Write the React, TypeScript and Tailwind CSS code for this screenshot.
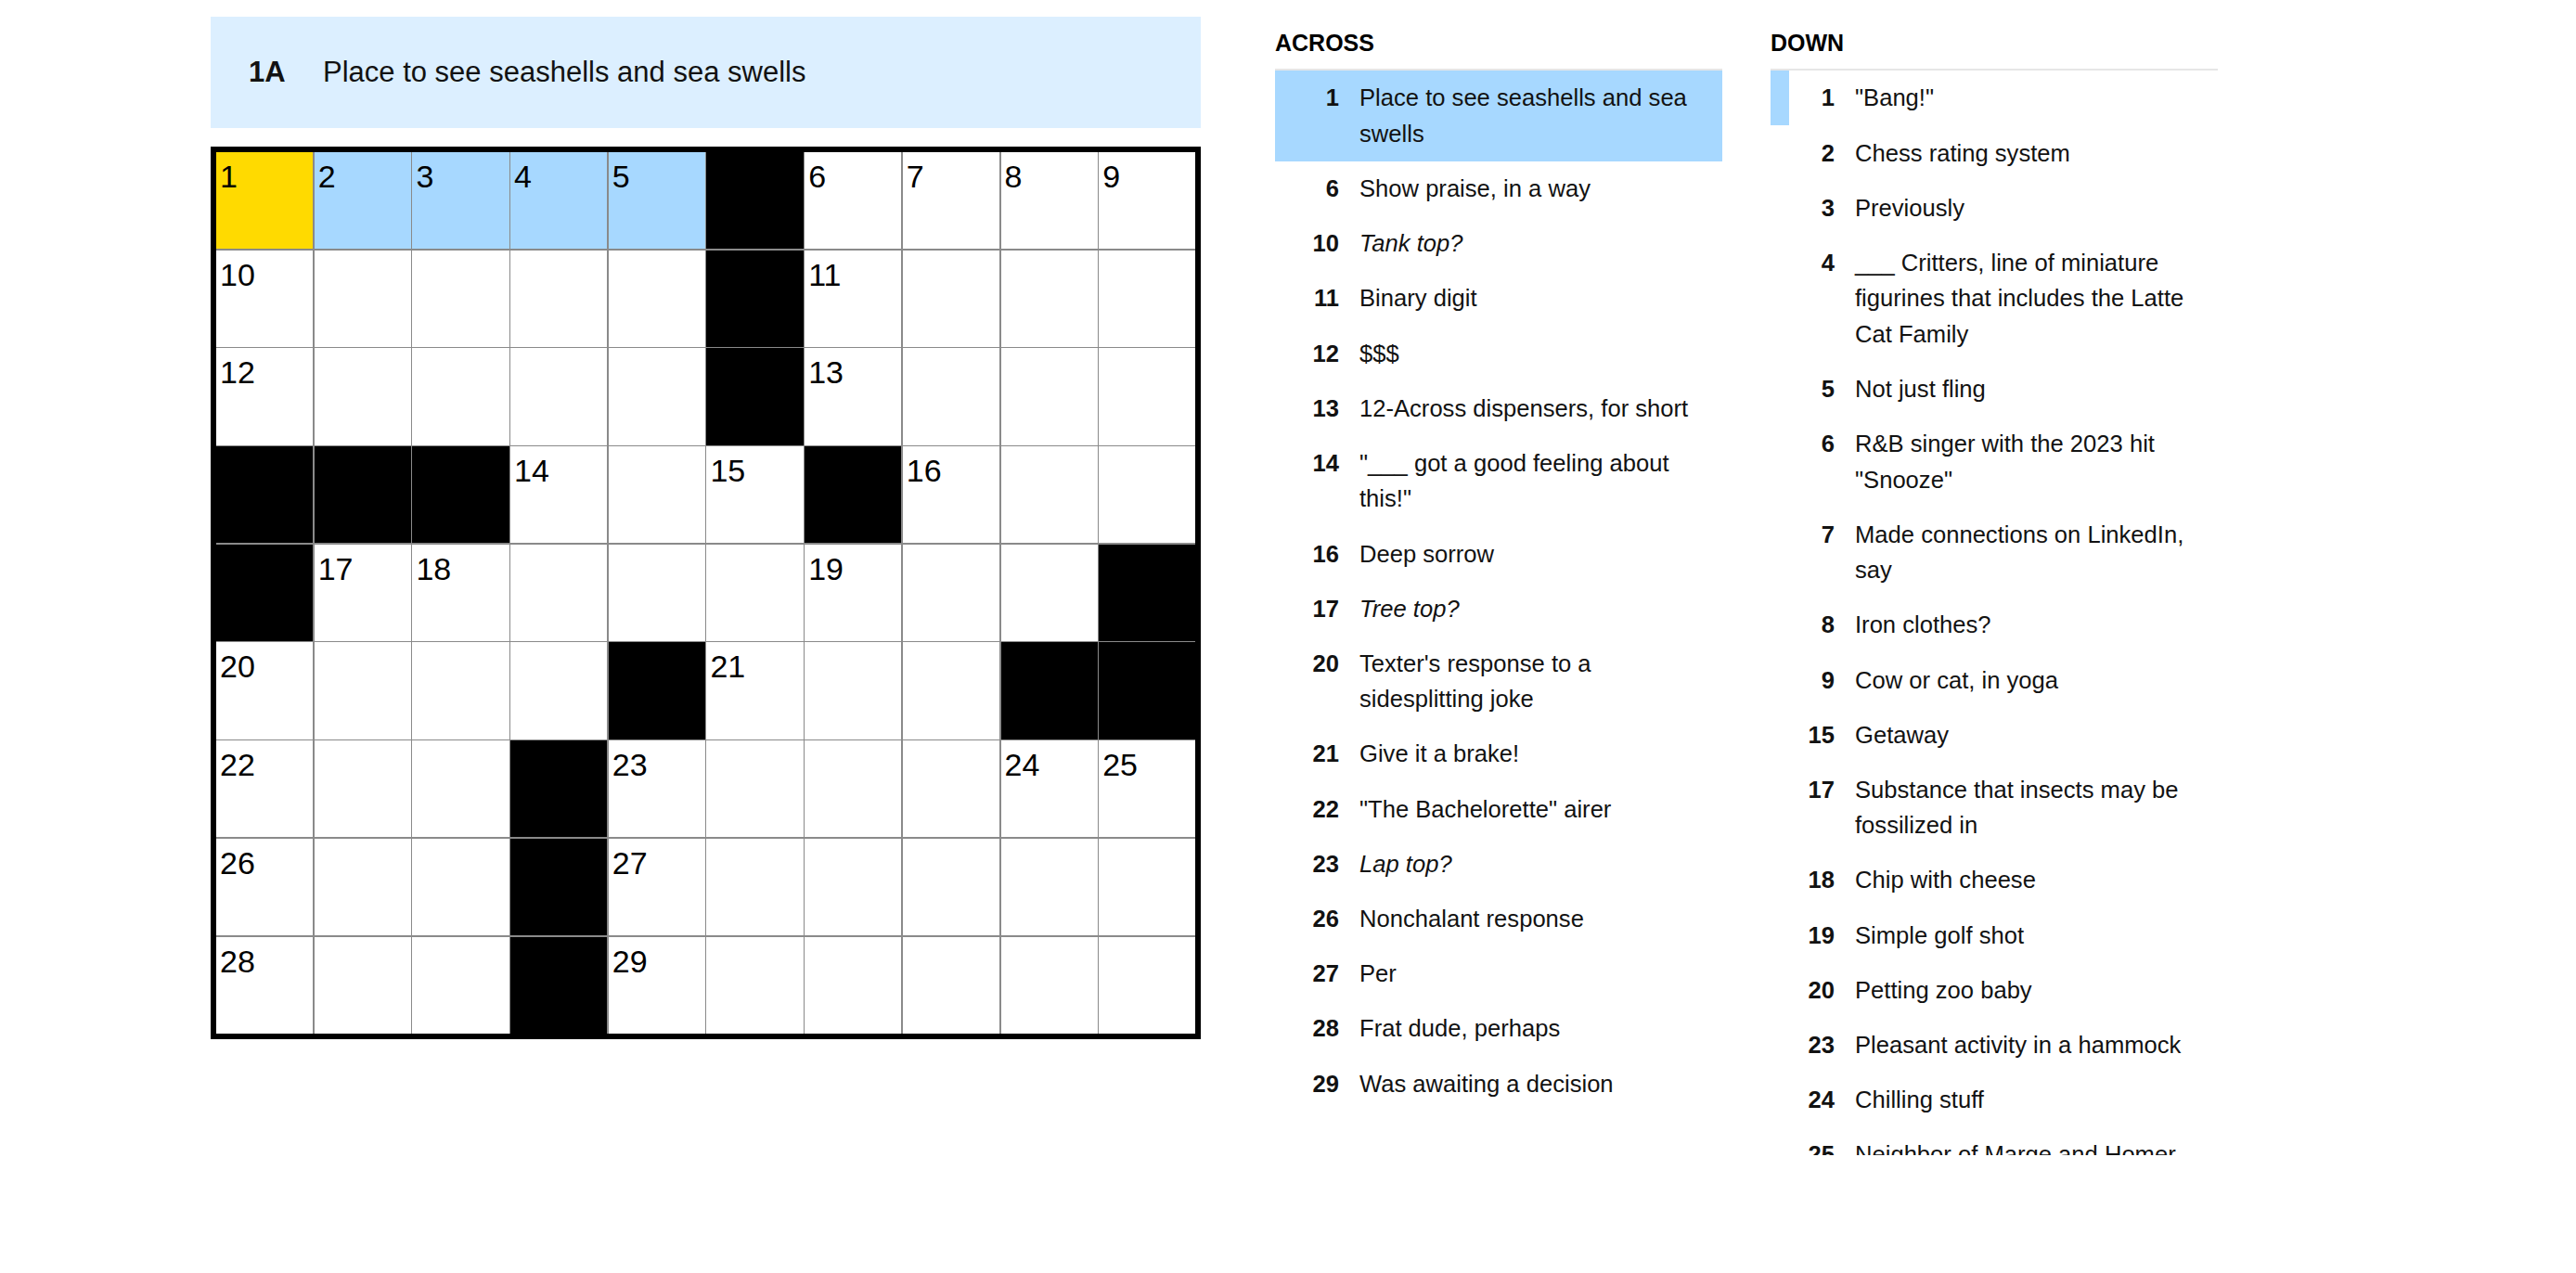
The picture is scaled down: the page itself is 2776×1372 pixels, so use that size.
const rows: string[][] = [
  ["1", "2", "3", "4", "5", "#", "6", "7", "8", "9"],
  ["10", "", "", "", "", "#", "11", "", "", ""],
  ["12", "", "", "", "", "#", "13", "", "", ""],
  ["#", "#", "#", "14", "", "15", "#", "16", "", ""],
  ["#", "17", "18", "", "", "", "19", "", "", "#"],
  ["20", "", "", "", "#", "21", "", "", "#", "#"],
  ["22", "", "", "#", "23", "", "", "", "24", "25"],
  ["26", "", "", "#", "27", "", "", "", "", ""],
  ["28", "", "", "#", "29", "", "", "", "", ""],
];

type Clue = { num: string; text: string; italic?: boolean };

const across: Clue[] = [
  { num: "1", text: "Place to see seashells and sea swells" },
  { num: "6", text: "Show praise, in a way" },
  { num: "10", text: "Tank top?", italic: true },
  { num: "11", text: "Binary digit" },
  { num: "12", text: "$$$" },
  { num: "13", text: "12-Across dispensers, for short" },
  { num: "14", text: "\"___ got a good feeling about this!\"" },
  { num: "16", text: "Deep sorrow" },
  { num: "17", text: "Tree top?", italic: true },
  { num: "20", text: "Texter's response to a sidesplitting joke" },
  { num: "21", text: "Give it a brake!" },
  { num: "22", text: "\"The Bachelorette\" airer" },
  { num: "23", text: "Lap top?", italic: true },
  { num: "26", text: "Nonchalant response" },
  { num: "27", text: "Per" },
  { num: "28", text: "Frat dude, perhaps" },
  { num: "29", text: "Was awaiting a decision" },
];

const down: Clue[] = [
  { num: "1", text: "\"Bang!\"" },
  { num: "2", text: "Chess rating system" },
  { num: "3", text: "Previously" },
  { num: "4", text: "___ Critters, line of miniature figurines that includes the Latte Cat Family" },
  { num: "5", text: "Not just fling" },
  { num: "6", text: "R&B singer with the 2023 hit \"Snooze\"" },
  { num: "7", text: "Made connections on LinkedIn, say" },
  { num: "8", text: "Iron clothes?" },
  { num: "9", text: "Cow or cat, in yoga" },
  { num: "15", text: "Getaway" },
  { num: "17", text: "Substance that insects may be fossilized in" },
  { num: "18", text: "Chip with cheese" },
  { num: "19", text: "Simple golf shot" },
  { num: "20", text: "Petting zoo baby" },
  { num: "23", text: "Pleasant activity in a hammock" },
  { num: "24", text: "Chilling stuff" },
  { num: "25", text: "Neighbor of Marge and Homer" },
];

function cellColor(r: number, c: number, value: string) {
  if (value === "#") return "bg-black";
  if (r === 0 && c === 0) return "bg-[#ffda00]";
  if (r === 0 && c < 5) return "bg-[#a7d8ff]";
  return "bg-white";
}

function ClueList({ title, clues, selected, related }: { title: string; clues: Clue[]; selected?: string; related?: string }) {
  return (
    <div className="w-[482px]">
      <h3 className="mt-[34px] pb-[15px] border-b-2 border-[#e6e6e6] text-[25px] leading-[25px] font-bold text-black">
        {title}
      </h3>
      <ol className="h-[1169px] overflow-hidden">
        {clues.map((clue) => {
          const isSelected = clue.num === selected;
          const isRelated = clue.num === related;
          return (
            <li
              key={clue.num}
              className={`flex py-[10.4px] border-l-[20px] text-[25.6px] leading-[38.4px] text-[#121212] ${
                isSelected ? "bg-[#a7d8ff] border-transparent" : isRelated ? "border-[#a7d8ff]" : "border-transparent"
              }`}
            >
              <span className="w-[49px] shrink-0 text-right font-bold">{clue.num}</span>
              <span className={`ml-[22px] w-[380px] ${clue.italic ? "italic" : ""}`}>{clue.text}</span>
            </li>
          );
        })}
      </ol>
    </div>
  );
}

export default function App() {
  return (
    <div className="h-[1372px] bg-white font-['Liberation_Sans',Arial,sans-serif]">
      <div className="flex pl-[227px]">
        {/* Puzzle: current clue bar and board */}
        <div className="w-[1067px] pt-[18px]">
          <div className="flex items-center h-[120px] pl-[41px] bg-[#dcefff] text-[31px] text-[#121212]">
            <span className="w-[80px] font-bold">1A</span>
            <span>Place to see seashells and sea swells</span>
          </div>

          <div className="mt-[20px] w-fit grid grid-cols-[repeat(10,104.2px)] grid-rows-[repeat(9,104.2px)] gap-[1.5px] bg-[#8a8a8a] border-[6px] border-black">
            {rows.map((row, r) =>
              row.map((value, c) => (
                <div key={`${r}-${c}`} className={`pl-[4px] pt-[9px] text-[34px] leading-none text-black ${cellColor(r, c, value)}`}>
                  {value !== "#" ? value : null}
                </div>
              ))
            )}
          </div>
        </div>

        {/* Clue columns */}
        <div className="ml-[80px]">
          <ClueList title="ACROSS" clues={across} selected="1" />
        </div>
        <div className="ml-[52px]">
          <ClueList title="DOWN" clues={down} related="1" />
        </div>
      </div>
    </div>
  );
}
